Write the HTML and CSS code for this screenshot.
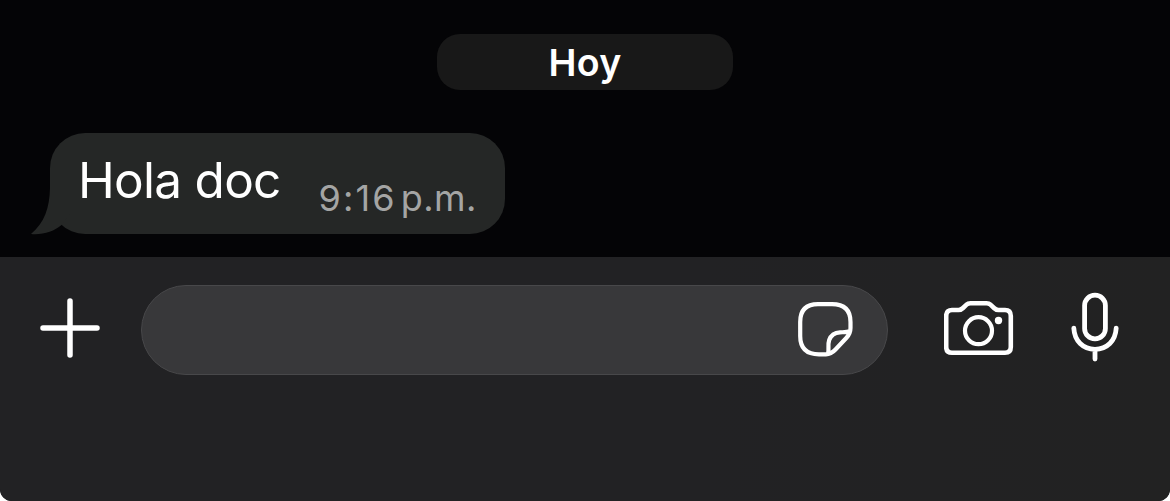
FILE: index.html
```html
<!DOCTYPE html>
<html lang="es">
<head>
<meta charset="utf-8">
<title>Chat</title>
<link rel="stylesheet" href="styles.css">
</head>
<body>
<div class="screen">
  <main class="chat">
    <div class="day">Hoy</div>
    <div class="bubble">
      <svg class="tail" width="40" height="66" viewBox="30 170 40 66"><path d="M50 170V188C49.500 208 44.500 222.500 31 234C43 235 54 231.500 61.500 225L70 214V170Z"/></svg>
      <span class="message">Hola doc</span>
      <span class="time"><span class="clock">9:16</span><span class="period">p.m.</span></span>
    </div>
  </main>
  <footer class="composer">
    <svg class="icon plus" width="60" height="60" viewBox="40 298 60 60"><path d="M43 328H97M70 301V355" stroke-width="5.500"/></svg>
    <div class="field">
      <svg class="icon" width="56" height="56" viewBox="797 301 56 56"><path d="M826 354.300H819Q800.200 354.300 800.200 336V322Q800.200 304.200 818 304.200H832Q850.500 304.200 850.500 322V328Q850.500 333.500 846.500 337.800L835.500 349.500Q831 354.300 826 354.300ZM828 353.500C829.300 349 827.500 345 829.200 340C831.200 334.300 835 332.500 840 332.300C844 332.200 847 332.500 849.800 331.300" stroke-width="4.200"/></svg>
    </div>
    <svg class="icon camera" width="70" height="56" viewBox="944 300 70 56"><path d="M952 310H958.500Q961 310 963 308L966.500 304.700Q968 303.200 970.500 303.200H986.500Q989 303.200 990.500 304.700L994 308Q996 310 998.500 310H1005Q1010.800 310 1010.800 316V347Q1010.800 352.700 1005 352.700H952Q946.200 352.700 946.200 347V316Q946.200 310 952 310Z" stroke-width="4.600"/><circle cx="978.500" cy="330.700" r="13.500" stroke-width="4.200"/><circle class="dot" cx="998.500" cy="320.500" r="3.700"/></svg>
    <svg class="icon mic" width="48" height="70" viewBox="1071 292 48 70"><rect x="1084.600" y="295.200" width="20.800" height="43.600" rx="10.400" stroke-width="4.800"/><path d="M1073.800 328.200C1074.500 341 1083 349.300 1095 349.300S1115.500 341 1116.200 328.200M1095 349.500V359" stroke-width="4.800"/></svg>
  </footer>
</div>
</body>
</html>
```
FILE: styles.css
```css
* { box-sizing: border-box; }
body { margin: 0; background: #fff; font-family: Inter, "Liberation Sans", sans-serif; }
.screen { display: flex; flex-direction: column; width: 1170px; height: 501px; overflow: hidden; border-radius: 0 0 12px 12px; background: #040406; }
.chat { display: flex; flex-direction: column; align-items: flex-start; height: 257px; padding: 34px 0 0 50px; }
.day { align-self: center; width: 296px; height: 56px; margin-left: -50px; border-radius: 23px; background: #181818; color: #fff; font-size: 37.500px; font-weight: 600; line-height: 57px; letter-spacing: 0.300px; text-align: center; }
.bubble { position: relative; display: flex; width: 455px; height: 101px; margin-top: 43px; padding: 0 28px 0 28px; justify-content: space-between; border-radius: 35px; background: #252726; white-space: nowrap; }
.tail { position: absolute; left: -20px; bottom: -2px; fill: #252726; }
.message { color: #fff; font-size: 49.500px; line-height: 95px; letter-spacing: -0.720px; }
.time { display: flex; gap: 4px; color: #a4a5a4; font-size: 36px; line-height: 130px; }
.clock { letter-spacing: 2.100px; }
.period { letter-spacing: 0.500px; }
.composer { display: flex; align-items: flex-start; height: 244px; padding: 28px 51px 0 40px; background: linear-gradient(90deg, #222224 60%, #222222); }
.icon { flex: none; display: block; fill: none; stroke: #fff; stroke-linecap: round; stroke-linejoin: round; }
.plus { margin-top: 13px; }
.field { display: flex; width: 747px; height: 90px; margin-left: 41px; padding: 15px 34px 0 0; justify-content: flex-end; border: 1px solid #48484a; border-radius: 45px; background: #38383a; }
.camera { margin: 15px 57px 0 56px; }
.mic { margin-top: 7px; }
.dot { fill: #fff; stroke: none; }
```
